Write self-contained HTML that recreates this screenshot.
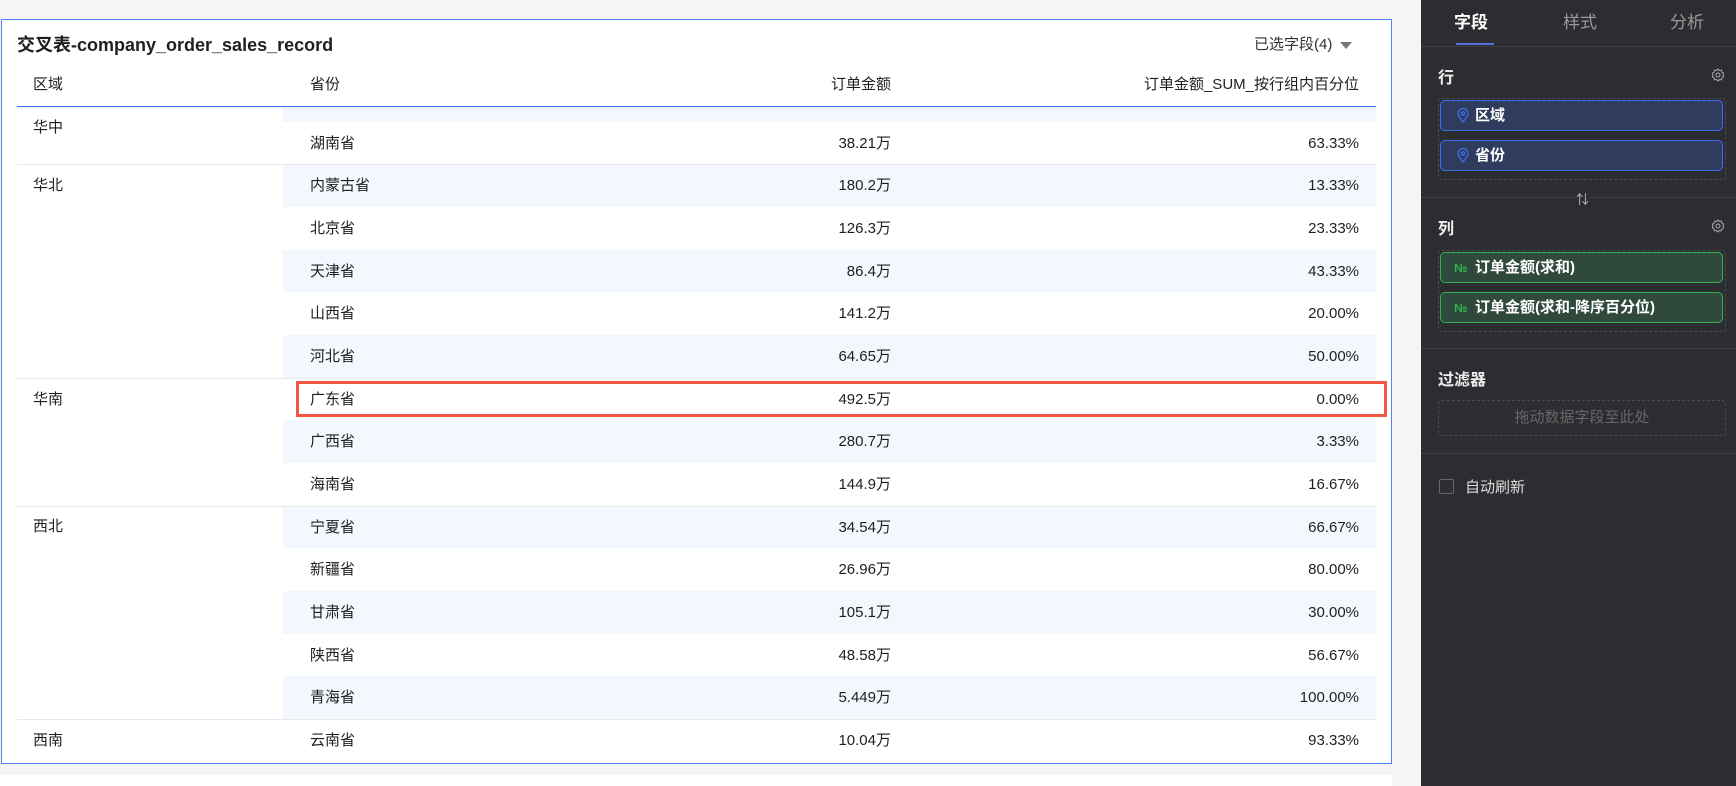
<!DOCTYPE html>
<html><head><meta charset="utf-8"><style>
*{margin:0;padding:0;box-sizing:border-box}
body{width:1736px;height:786px;background:#f5f5f6;font-family:"Liberation Sans","Noto Sans CJK SC",sans-serif;color:#1f1f1f;position:relative;overflow:hidden}
.a{position:absolute;white-space:nowrap}
.card{position:absolute;left:1px;top:19px;width:1391px;height:745px;background:#fff;border:1px solid #4d86f0}
.row{position:absolute;left:283px;width:1093px;height:43px}
.sh{background:#f3f7fe}
.t{font-size:15px;line-height:20px}
.sep{position:absolute;left:17px;width:1359px;height:1px;background:#e6e8ec}
.panel{position:absolute;left:1421px;top:0;width:315px;height:786px;background:#2c2d31}
.hl{position:absolute;left:0;width:315px;height:1px;background:#3e3f44}
.chip{position:absolute;left:19px;width:283px;height:31px;border-radius:5px;color:#fff;font-size:15px;line-height:29px;padding-left:34px;font-weight:bold}
.blue{background:#2f3c5e;border:1px solid #3a6ef0}
.green{background:#2f4a3d;border:1px solid #32b14f}
.dash{position:absolute;left:17px;width:288px;border:1px dashed #4a4b50;border-radius:4px}
</style></head><body>
<div class="a" style="left:0;top:775px;width:1392px;height:11px;background:#fff"></div>
<div class="card"></div>
<div class="a" style="left:17px;top:33px;font-size:18px;font-weight:bold;line-height:24px">交叉表-company_order_sales_record</div>
<div class="a t" style="left:1254px;top:35px;color:#333">已选字段(4) <span style="display:inline-block;width:0;height:0;border-left:6px solid transparent;border-right:6px solid transparent;border-top:7px solid #777;vertical-align:middle;margin-left:3px"></span></div>
<div class="a t" style="left:33px;top:75px">区域</div>
<div class="a t" style="left:310px;top:75px">省份</div>
<div class="a t" style="left:791px;top:75px;width:100px;text-align:right">订单金额</div>
<div class="a t" style="left:1059px;top:75px;width:300px;text-align:right">订单金额_SUM_按行组内百分位</div>

<div class="row sh" style="top:107px;height:15px"></div>
<div id="rows"></div>
<div class="a" style="left:17px;top:106px;width:1359px;height:1px;background:#3b78f0;box-shadow:0 2px 4px rgba(0,0,0,.08)"></div>

<div class="panel">
<div class="a" style="left:33px;top:8px;font-size:17px;color:#fff;font-weight:bold">字段</div>
<div class="a" style="left:142px;top:8px;font-size:17px;color:#999">样式</div>
<div class="a" style="left:249px;top:8px;font-size:17px;color:#999">分析</div>
<div class="a" style="left:35px;top:43px;width:38px;height:2px;background:#5a6fd6"></div>
<div class="hl" style="top:46px"></div>
<div class="a" style="left:17px;top:64px;font-size:16px;color:#eee;font-weight:bold">行</div>
<svg class="a" style="left:290px;top:68px" width="14" height="14" viewBox="0 0 14 14"><path d="M7 1l1.5 1.5 2-.3.4 2 1.8 1L12 7l.7 1.8-1.8 1-.4 2-2-.3L7 13l-1.5-1.5-2 .3-.4-2-1.8-1L2 7 1.3 5.2l1.8-1 .4-2 2 .3z" fill="none" stroke="#aaa"/><circle cx="7" cy="7" r="2" fill="none" stroke="#aaa"/></svg>
<div class="dash" style="top:98px;height:82px"></div>
<div class="chip blue" style="top:100px">区域</div>
<div class="chip blue" style="top:140px">省份</div>
<svg class="a" style="left:36px;top:108px" width="12" height="15" viewBox="0 0 12 15"><path d="M6 14C3 10 1 8 1 5.5a5 5 0 0 1 10 0C11 8 9 10 6 14z" fill="none" stroke="#3a6ef0" stroke-width="1.3"/><circle cx="6" cy="5.5" r="1.7" fill="none" stroke="#3a6ef0" stroke-width="1.3"/></svg>
<svg class="a" style="left:36px;top:148px" width="12" height="15" viewBox="0 0 12 15"><path d="M6 14C3 10 1 8 1 5.5a5 5 0 0 1 10 0C11 8 9 10 6 14z" fill="none" stroke="#3a6ef0" stroke-width="1.3"/><circle cx="6" cy="5.5" r="1.7" fill="none" stroke="#3a6ef0" stroke-width="1.3"/></svg>
<div class="hl" style="top:197px"></div>
<div class="a" style="left:155px;top:189px;font-size:13px;color:#bbb;background:#2c2d31">⇅</div>
<div class="a" style="left:17px;top:215px;font-size:16px;color:#eee;font-weight:bold">列</div>
<svg class="a" style="left:290px;top:219px" width="14" height="14" viewBox="0 0 14 14"><path d="M7 1l1.5 1.5 2-.3.4 2 1.8 1L12 7l.7 1.8-1.8 1-.4 2-2-.3L7 13l-1.5-1.5-2 .3-.4-2-1.8-1L2 7 1.3 5.2l1.8-1 .4-2 2 .3z" fill="none" stroke="#aaa"/><circle cx="7" cy="7" r="2" fill="none" stroke="#aaa"/></svg>
<div class="dash" style="top:250px;height:82px"></div>
<div class="chip green" style="top:252px">订单金额(求和)</div>
<div class="chip green" style="top:292px">订单金额(求和-降序百分位)</div>
<div class="a" style="left:33px;top:261px;font-size:12px;color:#32b14f;font-weight:bold">№</div>
<div class="a" style="left:33px;top:301px;font-size:12px;color:#32b14f;font-weight:bold">№</div>
<div class="hl" style="top:348px"></div>
<div class="a" style="left:17px;top:366px;font-size:16px;color:#eee;font-weight:bold">过滤器</div>
<div class="dash" style="top:400px;height:36px;text-align:center;font-size:15px;line-height:34px;color:#666">拖动数据字段至此处</div>
<div class="hl" style="top:453px"></div>
<div class="a" style="left:18px;top:479px;width:15px;height:15px;border:1px solid #666;border-radius:2px"></div>
<div class="a" style="left:44px;top:476px;font-size:15px;color:#ddd">自动刷新</div>
</div>

<div class="a" style="left:296px;top:381px;width:1091px;height:36px;border:3px solid #f25746"></div>

<script>
var d=[["湖南省","38.21万","63.33%"],["内蒙古省","180.2万","13.33%"],["北京省","126.3万","23.33%"],["天津省","86.4万","43.33%"],["山西省","141.2万","20.00%"],["河北省","64.65万","50.00%"],["广东省","492.5万","0.00%"],["广西省","280.7万","3.33%"],["海南省","144.9万","16.67%"],["宁夏省","34.54万","66.67%"],["新疆省","26.96万","80.00%"],["甘肃省","105.1万","30.00%"],["陕西省","48.58万","56.67%"],["青海省","5.449万","100.00%"],["云南省","10.04万","93.33%"]];
var h="";
d.forEach(function(r,i){var top=121.7+42.67*i;var ht=i==14?748-top:42.67;
h+='<div class="row'+(i%2?' sh':'')+'" style="top:'+top+'px;height:'+ht+'px"></div>';
var ty=top+12;
h+='<div class="a t" style="left:310px;top:'+ty+'px">'+r[0]+'</div>';
h+='<div class="a t" style="left:791px;top:'+ty+'px;width:100px;text-align:right">'+r[1]+'</div>';
h+='<div class="a t" style="left:1159px;top:'+ty+'px;width:200px;text-align:right">'+r[2]+'</div>';});
[1,6,9,14].forEach(function(k){h+='<div class="sep" style="top:'+(121.7+42.67*k)+'px"></div>'});
[["华中",118],["华北",176],["华南",390],["西北",517],["西南",731]].forEach(function(g){h+='<div class="a t" style="left:33px;top:'+g[1]+'px">'+g[0]+'</div>'});
document.getElementById("rows").outerHTML=h;
</script>
</body></html>
